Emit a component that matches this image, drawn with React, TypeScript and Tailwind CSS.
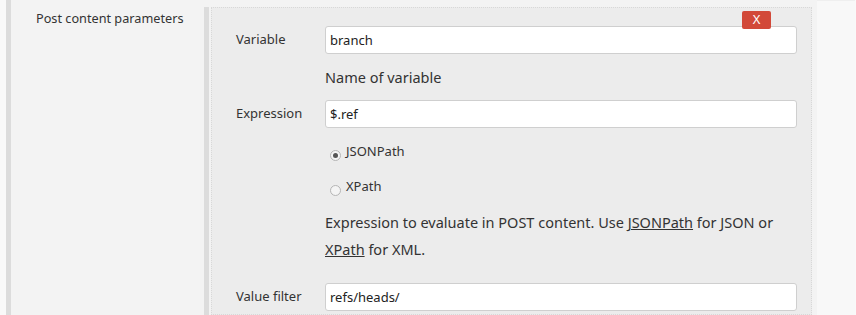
const font = { fontFamily: '"Noto Sans", "Open Sans", sans-serif' }

function Field({ label, value, top }: { label: string; value: string; top: string }) {
    return (
        <div className={`flex items-center ${top}`}>
            <div className="w-[113px] shrink-0 pl-[24px] text-[13px] text-[#333]">{label}</div>
            <input
                readOnly
                value={value}
                className="h-[28px] w-[472px] rounded-[3px] border border-[#cfcfcf] bg-white px-[4px] text-[13px] text-[#222] outline-none"
            />
        </div>
    )
}

function Radio({ checked, label, top }: { checked?: boolean; label: string; top: string }) {
    return (
        <div className={`flex h-[20px] items-center pl-[113px] ${top}`}>
            <span className="ml-[5px] mt-[6px] flex h-[11px] w-[11px] items-center justify-center rounded-full border border-[#b5b5b5] bg-[#f4f4f4]">
                {checked && <span className="h-[5px] w-[5px] rounded-full bg-[#555]" />}
            </span>
            <span className="ml-[5px] text-[13px] text-[#333]">{label}</span>
        </div>
    )
}

export default function App() {
    return (
        <div className="flex h-[315px] w-[856px] overflow-hidden bg-[#f9f9f9]" style={font}>
            <div className="w-[6px] shrink-0" />
            <div className="w-[5px] shrink-0 bg-[#dcdcdc]" />
            <div className="w-[193px] shrink-0 bg-[#f3f3f3] pl-[25px] pt-[9px] text-[12.7px] text-[#333]">
                Post content parameters
            </div>
            <div className="flex w-[613px] shrink-0 bg-[#f3f3f3] pt-[7px]">
                <div className="w-[5px] shrink-0 bg-[#dcdcdc]" />
                <div className="w-[2px] shrink-0" />
                <div className="relative w-[601px] shrink-0 border border-dotted border-[#d8d8d8] bg-[#ececec] pt-[18px]">
                    <button className="absolute right-[40px] top-[3px] flex h-[18px] w-[29px] items-center justify-center rounded-[2px] bg-[#d24939] text-[13px] font-normal text-white">
                        X
                    </button>
                    <Field label="Variable" value="branch" top="" />
                    <div className="mt-[13px] pl-[113px] text-[14.5px] leading-[20px] text-[#333]">Name of variable</div>
                    <Field label="Expression" value="$.ref" top="mt-[13px]" />
                    <Radio checked label="JSONPath" top="mt-[14px]" />
                    <Radio label="XPath" top="mt-[15px]" />
                    <div className="mt-[12px] pl-[113px] pr-[20px] text-[14.5px] leading-[27px] text-[#333]">
                        Expression to evaluate in POST content. Use <a className="underline" href="#">JSONPath</a> for JSON or{" "}
                        <a className="underline" href="#">XPath</a> for XML.
                    </div>
                    <Field label="Value filter" value="refs/heads/" top="mt-[20px]" />
                </div>
            </div>
            <div className="w-[38px] shrink-0 border-t border-[#efefef] bg-[#f8f8f8]" />
        </div>
    )
}
